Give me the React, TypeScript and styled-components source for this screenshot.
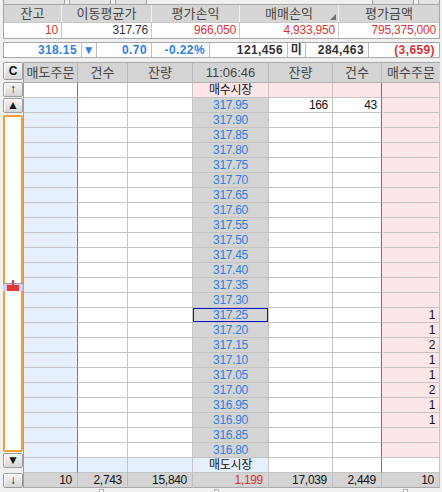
import React from "react";
import styled, { createGlobalStyle } from "styled-components";

const GlobalStyle = createGlobalStyle`
  html, body {
    margin: 0;
    padding: 0;
    background: #f0f0f0;
  }
  body {
    font-family: "Liberation Sans", "Noto Sans CJK KR", sans-serif;
    font-size: 12px;
    color: #222;
  }
`;

const prices: string[] = [];
for (let i = 0; i < 24; i++) prices.push((317.95 - i * 0.05).toFixed(2));

const buyOrders: Record<string, string> = {
  "317.25": "1",
  "317.20": "1",
  "317.15": "2",
  "317.10": "1",
  "317.05": "1",
  "317.00": "2",
  "316.95": "1",
  "316.90": "1",
};

const BLUE_BG = "#e6f0fc";
const PINK_BG = "#fde6e7";
const GRAY_BG = "#d4d4d4";
const PRICE_BLUE = "#2f7fe0";
const RED = "#d83434";

const App = () => {
  return (
    <Page>
      <GlobalStyle />
      <TopStrip>
        <Stub $w={60} />
        <Stub $w={40} />
        <Stub $w={30} />
        <Spacer />
        <Stub $w={40} />
        <Stub $w={20} />
      </TopStrip>

      <Summary>
        <SumHead>잔고</SumHead>
        <SumHead>이동평균가</SumHead>
        <SumHead>평가손익</SumHead>
        <SumHead $sort>매매손익</SumHead>
        <SumHead $last>평가금액</SumHead>
        <SumVal $color={RED}>10</SumVal>
        <SumVal $color="#333">317.76</SumVal>
        <SumVal $color={RED}>966,050</SumVal>
        <SumVal $color={RED}>4,933,950</SumVal>
        <SumVal $color={RED} $last>
          795,375,000
        </SumVal>
      </Summary>

      <PriceBar>
        <PriceCell $color={PRICE_BLUE}>318.15</PriceCell>
        <PriceCell $color={PRICE_BLUE} $center>
          ▼
        </PriceCell>
        <PriceCell $color={PRICE_BLUE}>0.70</PriceCell>
        <PriceCell $color={PRICE_BLUE}>-0.22%</PriceCell>
        <PriceCell $color="#333">121,456</PriceCell>
        <PriceCell $color="#333" $center>
          미
        </PriceCell>
        <PriceCell $color="#333">284,463</PriceCell>
        <PriceCell $color={RED} $last>
          (3,659)
        </PriceCell>
      </PriceBar>

      <Main>
        <Controls>
          <Btn $h={18}>C</Btn>
          <Btn $h={15} $mt={2}>
            ↑
          </Btn>
          <Btn $h={15} $mt={1}>
            ▲
          </Btn>
          <Track>
            <Marker>
              <MarkerStem />
              <MarkerBase />
            </Marker>
          </Track>
          <Btn $h={15} $mt={1}>
            ▼
          </Btn>
          <Btn $h={15} $mt={5}>
            ↓
          </Btn>
        </Controls>

        <Grid>
          <Head>매도주문</Head>
          <Head>건수</Head>
          <Head>잔량</Head>
          <Head>11:06:46</Head>
          <Head>잔량</Head>
          <Head>건수</Head>
          <Head $last>매수주문</Head>

          {/* 매수시장 */}
          <Cell $line="blue" />
          <Cell />
          <Cell />
          <Cell $bg={PINK_BG} $align="center" $color="#111">
            매수시장
          </Cell>
          <Cell $bg={PINK_BG} />
          <Cell $bg={PINK_BG} $line="red" />
          <Cell $bg={PINK_BG} />

          {prices.map((p, i) => (
            <React.Fragment key={p}>
              <Cell $bg={BLUE_BG} $line="blue" />
              <Cell />
              <Cell />
              <Cell
                $bg={GRAY_BG}
                $align="center"
                $color={PRICE_BLUE}
                $sel={p === "317.25"}
              >
                {p}
              </Cell>
              <Cell>{i === 0 ? "166" : ""}</Cell>
              <Cell $line="red">{i === 0 ? "43" : ""}</Cell>
              <Cell $bg={PINK_BG}>{buyOrders[p] || ""}</Cell>
            </React.Fragment>
          ))}

          {/* 매도시장 */}
          <Cell $bg={BLUE_BG} $line="blue" />
          <Cell $bg={BLUE_BG} />
          <Cell $bg={BLUE_BG} />
          <Cell $bg={BLUE_BG} $align="center" $color="#111">
            매도시장
          </Cell>
          <Cell />
          <Cell $line="red" />
          <Cell />

          <Total>10</Total>
          <Total>2,743</Total>
          <Total>15,840</Total>
          <Total $color={RED}>1,199</Total>
          <Total>17,039</Total>
          <Total>2,449</Total>
          <Total>10</Total>
        </Grid>
      </Main>
      <Footer>
        <Tick $x={76} />
        <Tick $x={191} />
        <Tick $x={380} />
      </Footer>
    </Page>
  );
};

export default App;

const Page = styled.div`
  width: 442px;
  height: 492px;
  box-sizing: border-box;
  padding: 0 2px 0 3px;
  overflow: hidden;
  display: flex;
  flex-direction: column;
`;

const TopStrip = styled.div`
  height: 4px;
  display: flex;
  gap: 4px;
  overflow: hidden;
`;

const Stub = styled.div<{ $w: number }>`
  width: ${(p) => p.$w}px;
  height: 6px;
  margin-top: -3px;
  border: 1px solid #a0a0a0;
  border-radius: 2px;
  background: #e4e4e4;
`;

const Spacer = styled.div`
  flex: 1;
`;

const Summary = styled.div`
  display: grid;
  grid-template-columns: 58px 90px 88px 99px 100px;
  border: 1px solid #a8a8a8;
`;

const SumHead = styled.div<{ $sort?: boolean; $last?: boolean }>`
  position: relative;
  height: 17px;
  line-height: 17px;
  background: #d6d6d6;
  color: #454545;
  font-size: 13px;
  text-align: center;
  border-right: ${(p) => (p.$last ? "none" : "1px solid #f2f2f2")};

  &::after {
    content: "";
    display: ${(p) => (p.$sort ? "block" : "none")};
    position: absolute;
    right: 2px;
    bottom: 2px;
    width: 0;
    height: 0;
    border-left: 6px solid transparent;
    border-bottom: 6px solid #707070;
  }
`;

const SumVal = styled.div<{ $color: string; $last?: boolean }>`
  height: 15px;
  line-height: 15px;
  background: #fff;
  color: ${(p) => p.$color};
  text-align: right;
  padding-right: 3px;
  letter-spacing: -0.2px;
  border-top: 1px solid #c8c8c8;
  border-right: ${(p) => (p.$last ? "none" : "1px solid #c8c8c8")};
`;

const PriceBar = styled.div`
  margin-top: 3px;
  display: grid;
  grid-template-columns: 78px 15px 55px 58px 78px 18px 63px 70px;
  border: 1px solid #a8a8a8;
  background: #fff;
`;

const PriceCell = styled.div<{
  $color: string;
  $center?: boolean;
  $last?: boolean;
}>`
  height: 14px;
  line-height: 14px;
  font-weight: bold;
  color: ${(p) => p.$color};
  text-align: ${(p) => (p.$center ? "center" : "right")};
  padding-right: ${(p) => (p.$center ? "0" : "4px")};
  letter-spacing: 0.4px;
  border-right: ${(p) => (p.$last ? "none" : "1px solid #c0c0c0")};
`;

const Main = styled.div`
  margin-top: 4px;
  display: flex;
`;

const Controls = styled.div`
  width: 20px;
  display: flex;
  flex-direction: column;
`;

const Btn = styled.div<{ $h: number; $mt?: number }>`
  height: ${(p) => p.$h}px;
  margin-top: ${(p) => p.$mt || 0}px;
  box-sizing: border-box;
  border: 1px solid #9c9c9c;
  border-radius: 2px;
  background: linear-gradient(#f6f6f6, #d6d6d6);
  box-shadow: inset 1px 1px #ffffff;
  display: flex;
  align-items: center;
  justify-content: center;
  font-size: 12px;
  font-weight: bold;
  color: #111;
  line-height: 1;
`;

const Track = styled.div`
  position: relative;
  flex: 1;
  margin-top: 2px;
  box-sizing: border-box;
  border: 2px solid #f0a038;
  border-radius: 2px;
  background: #fff;
`;

const Marker = styled.div`
  position: absolute;
  left: -2px;
  right: -2px;
  top: 166px;
  height: 7px;
  background: #d8ccec;
  border-top: 1px solid #a0a0a0;
`;

const MarkerStem = styled.div`
  position: absolute;
  left: 9px;
  top: -4px;
  width: 2px;
  height: 5px;
  background: #e03838;
`;

const MarkerBase = styled.div`
  position: absolute;
  left: 4px;
  top: 1px;
  width: 12px;
  height: 6px;
  background: #e03838;
`;

const Grid = styled.div`
  width: 417px;
  box-sizing: border-box;
  display: grid;
  grid-template-columns: 54px 50px 65px 76px 64px 49px 58px;
  grid-template-rows: 20px repeat(26, 15px) 15px;
  border-left: 1px solid #a0a0a0;
  border-top: 1px solid #a8a8a8;
`;

const Head = styled.div<{ $last?: boolean }>`
  box-sizing: border-box;
  background: #d4d4d4;
  color: #444;
  font-size: 13px;
  line-height: 19px;
  text-align: center;
  white-space: nowrap;
  border-right: ${(p) => (p.$last ? "none" : "1px solid #b8b8b8")};
  border-bottom: 1px solid #b0b0b0;
`;

const lineColor = (line?: "blue" | "red") =>
  line === "blue" ? "#3a84e4" : line === "red" ? "#e04848" : "#c4c4c4";

const Cell = styled.div<{
  $bg?: string;
  $color?: string;
  $align?: "center" | "right";
  $line?: "blue" | "red";
  $sel?: boolean;
}>`
  box-sizing: border-box;
  background: ${(p) => p.$bg || "#fff"};
  color: ${(p) => p.$color || "#111"};
  text-align: ${(p) => p.$align || "right"};
  padding-right: ${(p) => (p.$align === "center" ? "0" : "4px")};
  line-height: 14px;
  letter-spacing: -0.3px;
  white-space: nowrap;
  border-right: 1px solid ${(p) => lineColor(p.$line)};
  border-bottom: 1px solid #c4c4c4;
  box-shadow: ${(p) => (p.$sel ? "inset 0 0 0 1px #0a14c8" : "none")};
`;

const Total = styled.div<{ $color?: string }>`
  box-sizing: border-box;
  background: #d4d4d4;
  color: ${(p) => p.$color || "#111"};
  text-align: right;
  padding-right: 5px;
  line-height: 14px;
  letter-spacing: -0.3px;
  border-right: 1px solid #bdbdbd;
  border-bottom: 1px solid #a8a8a8;
`;

const Footer = styled.div`
  position: relative;
  height: 5px;
  margin-left: 20px;
`;

const Tick = styled.div<{ $x: number }>`
  position: absolute;
  left: ${(p) => p.$x}px;
  top: 1px;
  width: 3px;
  height: 3px;
  border: 1px solid #b0b0b0;
  background: #fff;
`;
